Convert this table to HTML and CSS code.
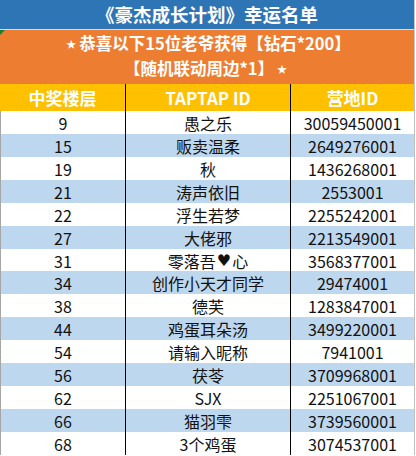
FILE: index.html
```html
<!DOCTYPE html>
<html lang="zh">
<head>
<meta charset="utf-8">
<link rel="stylesheet" href="styles.css">
</head>
<body>
<div class="sheet">
  <div class="title">《豪杰成长计划》幸运名单</div>
  <div class="notice">
    <span class="tri"></span>
    <div class="line"><span class="star">★</span>恭喜以下15位老爷获得【钻石*200】</div>
    <div class="line">【随机联动周边*1】<span class="star">★</span></div>
  </div>
  <div class="row head">
    <div class="c">中奖楼层</div>
    <div class="c">TAPTAP ID</div>
    <div class="c">营地ID</div>
  </div>
  <div class="row"><div class="c">9</div><div class="c">愚之乐</div><div class="c">30059450001</div></div>
  <div class="row alt"><div class="c">15</div><div class="c">贩卖温柔</div><div class="c">2649276001</div></div>
  <div class="row"><div class="c">19</div><div class="c">秋</div><div class="c">1436268001</div></div>
  <div class="row alt"><div class="c">21</div><div class="c">涛声依旧</div><div class="c">2553001</div></div>
  <div class="row"><div class="c">22</div><div class="c">浮生若梦</div><div class="c">2255242001</div></div>
  <div class="row alt"><div class="c">27</div><div class="c">大佬邪</div><div class="c">2213549001</div></div>
  <div class="row"><div class="c">31</div><div class="c">零落吾<span class="heart">♥</span>心</div><div class="c">3568377001</div></div>
  <div class="row alt"><div class="c">34</div><div class="c">创作小天才同学</div><div class="c">29474001</div></div>
  <div class="row"><div class="c">38</div><div class="c">德芙</div><div class="c">1283847001</div></div>
  <div class="row alt"><div class="c">44</div><div class="c">鸡蛋耳朵汤</div><div class="c">3499220001</div></div>
  <div class="row"><div class="c">54</div><div class="c">请输入昵称</div><div class="c">7941001</div></div>
  <div class="row alt"><div class="c">56</div><div class="c">茯苓</div><div class="c">3709968001</div></div>
  <div class="row"><div class="c">62</div><div class="c">SJX</div><div class="c">2251067001</div></div>
  <div class="row alt"><div class="c">66</div><div class="c">猫羽雫</div><div class="c">3739560001</div></div>
  <div class="row"><div class="c">68</div><div class="c">3个鸡蛋</div><div class="c">3074537001</div></div>
</div>
</body>
</html>
```
FILE: styles.css
```css
html, body {
  margin: 0;
  padding: 0;
  background: #ffffff;
}
body {
  font-family: "Noto Sans CJK SC", "Noto Sans", sans-serif;
  overflow: hidden;
}
.sheet {
  width: 415px;
  display: flex;
  flex-direction: column;
}
.title {
  height: 29px;
  background: #2e75b6;
  color: #ffffff;
  font-weight: bold;
  font-size: 18.5px;
  line-height: 29px;
  text-align: center;
  border-bottom: 1px solid #dcdcdc;
  border-right: 1px solid #c8c8c8;
}
.notice {
  position: relative;
  height: 54px;
  background: #ed7d31;
  color: #ffffff;
  font-weight: bold;
  font-size: 16.5px;
  display: flex;
  flex-direction: column;
  justify-content: center;
  align-items: center;
  border-right: 1px solid #c8c8c8;
}
.notice .line {
  line-height: 25px;
  height: 25px;
  transform: translateY(-1px);
}
.star {
  font-size: 10px;
  vertical-align: 2px;
  margin: 0 3px;
}
.tri {
  position: absolute;
  left: 0;
  top: 0;
  width: 0;
  height: 0;
  border-top: 5px solid #1e7b2f;
  border-right: 5px solid transparent;
}
.row {
  display: grid;
  grid-template-columns: 126px 165px 124px;
  height: 22.93px;
  background: #ffffff;
}
.row.alt {
  background: #bdd7ee;
}
.row .c {
  display: flex;
  align-items: center;
  justify-content: center;
  font-size: 16px;
  color: #111111;
  border-right: 1px solid #000000;
  box-sizing: border-box;
  white-space: nowrap;
}
.row .c:first-child {
  border-left: 1px solid #a6a6a6;
}
.row .c:last-child {
  border-right: 1px solid #c0c0c0;
}
.row.head {
  height: 27px;
  background: #ffc000;
}
.row.head .c {
  color: #ffffff;
  font-weight: bold;
  font-size: 17px;
}
.row.head .c:first-child {
  border-left: none;
}
.heart {
  font-family: "DejaVu Sans", sans-serif;
  font-size: 16px;
  color: #111;
  margin: 0 1px;
}
```
